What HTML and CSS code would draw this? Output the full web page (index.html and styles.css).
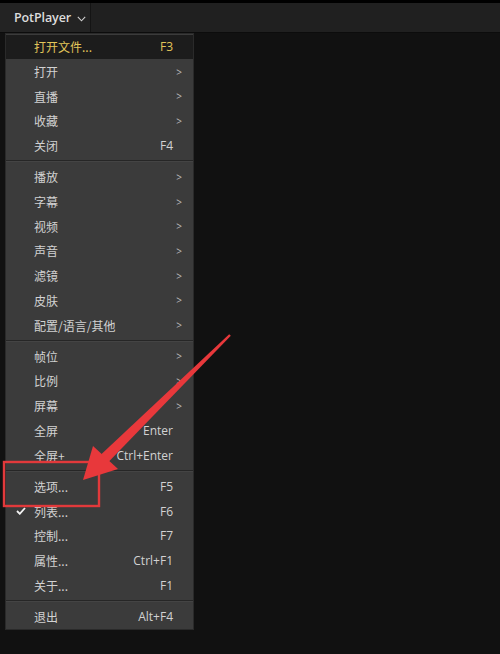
FILE: index.html
```html
<!DOCTYPE html>
<html>
<head>
<meta charset="utf-8">
<link rel="stylesheet" href="styles.css">
</head>
<body>
<div class="app">
  <div class="topstrip"></div>
  <div class="titlebar">
    <div class="tab">PotPlayer<svg class="chev" width="9" height="6" viewBox="0 0 9 6"><path d="M0.8 0.8 L4.5 4.8 L8.2 0.8" fill="none" stroke="#cfcfcf" stroke-width="1.1"/></svg></div>
  </div>
  <div class="content">
    <div class="menu">
      <div class="row active"><span class="gut"></span><span class="lbl">打开文件...</span><span class="key">F3</span></div>
      <div class="row"><span class="gut"></span><span class="lbl">打开</span><span class="arr">&gt;</span></div>
      <div class="row"><span class="gut"></span><span class="lbl">直播</span><span class="arr">&gt;</span></div>
      <div class="row"><span class="gut"></span><span class="lbl">收藏</span><span class="arr">&gt;</span></div>
      <div class="row"><span class="gut"></span><span class="lbl">关闭</span><span class="key">F4</span></div>
      <div class="sep"></div>
      <div class="row"><span class="gut"></span><span class="lbl">播放</span><span class="arr">&gt;</span></div>
      <div class="row"><span class="gut"></span><span class="lbl">字幕</span><span class="arr">&gt;</span></div>
      <div class="row"><span class="gut"></span><span class="lbl">视频</span><span class="arr">&gt;</span></div>
      <div class="row"><span class="gut"></span><span class="lbl">声音</span><span class="arr">&gt;</span></div>
      <div class="row"><span class="gut"></span><span class="lbl">滤镜</span><span class="arr">&gt;</span></div>
      <div class="row"><span class="gut"></span><span class="lbl">皮肤</span><span class="arr">&gt;</span></div>
      <div class="row"><span class="gut"></span><span class="lbl">配置/语言/其他</span><span class="arr">&gt;</span></div>
      <div class="sep"></div>
      <div class="row"><span class="gut"></span><span class="lbl">帧位</span><span class="arr">&gt;</span></div>
      <div class="row"><span class="gut"></span><span class="lbl">比例</span><span class="arr">&gt;</span></div>
      <div class="row"><span class="gut"></span><span class="lbl">屏幕</span><span class="arr">&gt;</span></div>
      <div class="row"><span class="gut"></span><span class="lbl">全屏</span><span class="key">Enter</span></div>
      <div class="row"><span class="gut"></span><span class="lbl">全屏+</span><span class="key">Ctrl+Enter</span></div>
      <div class="sep"></div>
      <div class="row"><span class="gut"></span><span class="lbl">选项...</span><span class="key">F5</span></div>
      <div class="row"><span class="gut"><svg width="10" height="8" viewBox="0 0 10 8"><path d="M1 4 L3.8 6.8 L9 1" fill="none" stroke="#f2f2f2" stroke-width="1.8"/></svg></span><span class="lbl">列表...</span><span class="key">F6</span></div>
      <div class="row"><span class="gut"></span><span class="lbl">控制...</span><span class="key">F7</span></div>
      <div class="row"><span class="gut"></span><span class="lbl">属性...</span><span class="key">Ctrl+F1</span></div>
      <div class="row"><span class="gut"></span><span class="lbl">关于...</span><span class="key">F1</span></div>
      <div class="sep"></div>
      <div class="row"><span class="gut"></span><span class="lbl">退出</span><span class="key">Alt+F4</span></div>
    </div>
  </div>
  <svg class="annot" width="500" height="654" viewBox="0 0 500 654">
    <rect x="4" y="462" width="95" height="44" fill="none" stroke="#e2393b" stroke-width="2.4"/>
    <polygon points="229.2,334.2 230.8,335.8 108.7,461.7 101.3,454.3" fill="#e8383b"/>
    <polygon points="83,480 93,446 118,469" fill="#e8383b"/>
  </svg>
</div>
</body>
</html>
```
FILE: styles.css
```css
html, body {
  margin: 0;
  padding: 0;
  background: #111111;
}
.app {
  position: relative;
  width: 500px;
  height: 654px;
  overflow: hidden;
  background: #111111;
  font-family: "Noto Sans CJK SC", "Microsoft YaHei", sans-serif;
}
.topstrip {
  height: 3px;
  background: #000000;
}
.titlebar {
  height: 29px;
  background: #202020;
  border-bottom: 1px solid #0c0c0c;
  display: flex;
}
.tab {
  width: 76px;
  padding-left: 14px;
  border-right: 1px solid #141414;
  background: #232323;
  display: flex;
  align-items: center;
  gap: 6px;
  color: #dcdcdc;
  font-family: "Open Sans", "Noto Sans", sans-serif;
  font-size: 12.5px;
  font-weight: 600;
  letter-spacing: -0.1px;
}
.chev {
  margin-top: 2px;
}
.content {
  padding-left: 5px;
}
.menu {
  width: 187px;
  background: #3b3b3b;
  border: 1px solid #2a2a2a;
  padding: 0.5px 0;
}
.row {
  height: 24.7px;
  display: grid;
  grid-template-columns: 28px 1fr auto;
  align-items: center;
  color: #d2d2d2;
  font-size: 12px;
}
.row.active {
  background: #1c1c1c;
  color: #e2c65a;
}
.gut {
  display: flex;
  justify-content: center;
  padding-left: 2px;
}
.lbl {
  white-space: nowrap;
}
.key {
  font-family: "Open Sans", "Noto Sans", sans-serif;
  font-size: 12px;
  padding-right: 20px;
}
.arr {
  font-family: "Open Sans", "Noto Sans", sans-serif;
  font-size: 10px;
  color: #bdbdbd;
  padding-right: 11px;
}
.sep {
  height: 1px;
  background: #262626;
  border-bottom: 1px solid #444444;
  margin: 2.3px 0;
}
.annot {
  position: absolute;
  left: 0;
  top: 0;
  pointer-events: none;
}
```
